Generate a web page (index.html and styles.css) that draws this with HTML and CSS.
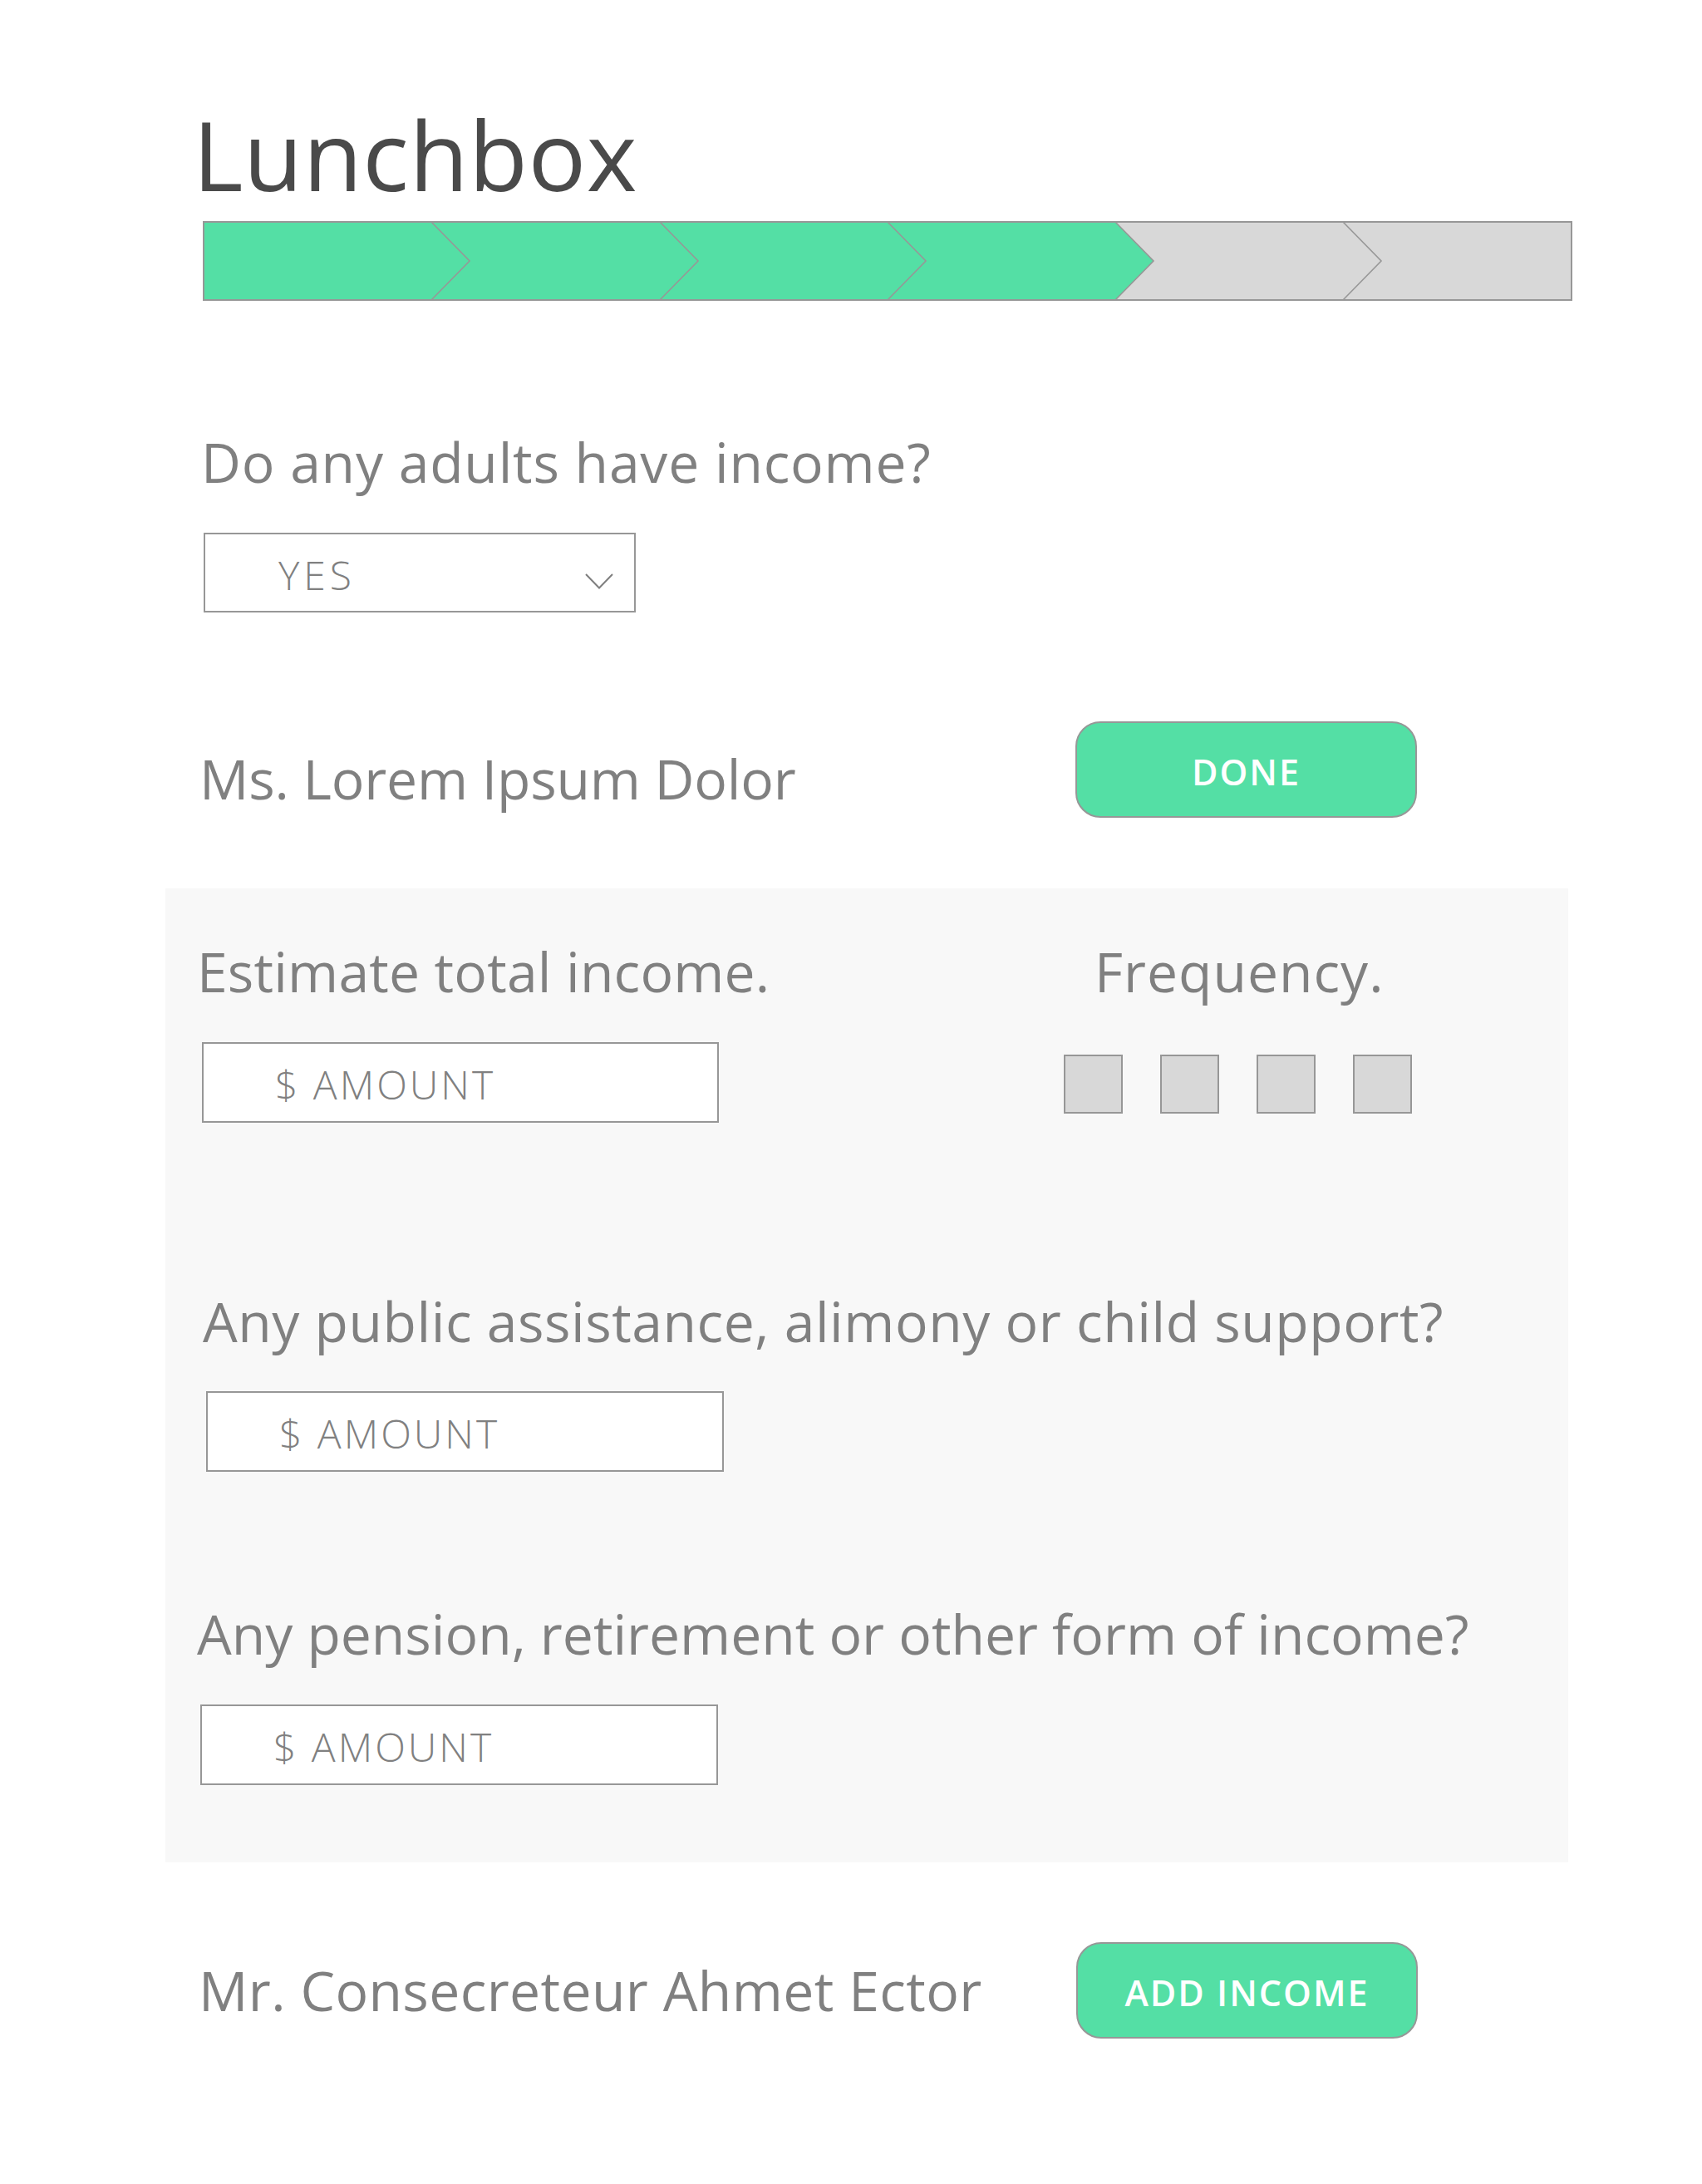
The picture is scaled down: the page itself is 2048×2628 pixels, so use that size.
FILE: index.html
```html
<!DOCTYPE html>
<html lang="en">
<head>
<meta charset="utf-8">
<title>Lunchbox</title>
<link rel="stylesheet" href="styles.css">
</head>
<body>
<div class="page">
  <h1 class="title">Lunchbox</h1>

  <svg class="progress" width="1648" height="96" viewBox="0 0 1648 96" aria-hidden="true">
    <rect x="1" y="1" width="1646" height="94" fill="#d8d8d8"/>
    <polygon points="1,1 1098,1 1144,48 1098,95 1,95" fill="#54dfa5"/>
    <g fill="none" stroke="#979797" stroke-width="1.6">
      <polyline points="275,1 321,48 275,95"/>
      <polyline points="550,1 596,48 550,95"/>
      <polyline points="824,1 870,48 824,95"/>
      <polyline points="1098,1 1144,48 1098,95"/>
      <polyline points="1372,1 1418,48 1372,95"/>
    </g>
    <rect x="1" y="1" width="1646" height="94" fill="none" stroke="#979797" stroke-width="2"/>
  </svg>

  <p class="label label-q1">Do any adults have income?</p>
  <div class="select">
    <span class="field-text select-text">YES</span>
    <svg class="chev" width="34" height="19" viewBox="0 0 34 19" aria-hidden="true">
      <polyline points="1,1 17,17.5 33,1" fill="none" stroke="#7f7f7f" stroke-width="2"/>
    </svg>
  </div>

  <div class="person person-first">
    <p class="label person-name">Ms. Lorem Ipsum Dolor</p>
    <div class="btn"><span class="btn-text">DONE</span></div>
  </div>

  <section class="panel">
    <div class="panel-row">
      <div class="col-left">
        <p class="label label-est">Estimate total income.</p>
        <div class="field field-1"><span class="field-text">$ AMOUNT</span></div>
      </div>
      <div class="col-right">
        <p class="label label-freq">Frequency.</p>
        <div class="freq">
          <span class="sq"></span><span class="sq"></span><span class="sq"></span><span class="sq"></span>
        </div>
      </div>
    </div>

    <p class="label label-pub">Any public assistance, alimony or child support?</p>
    <div class="field field-2"><span class="field-text">$ AMOUNT</span></div>

    <p class="label label-pen">Any pension, retirement or other form of income?</p>
    <div class="field field-3"><span class="field-text">$ AMOUNT</span></div>
  </section>

  <div class="person person-second">
    <p class="label person-name">Mr. Consecreteur Ahmet Ector</p>
    <div class="btn"><span class="btn-text">ADD INCOME</span></div>
  </div>
</div>
</body>
</html>
```

FILE: styles.css
```css
* { box-sizing: border-box; }

html, body {
  margin: 0;
  padding: 0;
  background: #ffffff;
}

body {
  font-family: "Open Sans", "Liberation Sans", sans-serif;
  color: #808080;
}

.page {
  width: 2048px;
  min-height: 2628px;
  padding: 127px 0 0 240px;
}

.title {
  margin: 0 0 0 -8px;
  font-size: 116px;
  line-height: 1;
  font-weight: 400;
  color: #4a4a4a;
  letter-spacing: 0.5px;
}

.progress {
  display: block;
  margin: 23px 0 0 4px;
}

.label {
  margin: 0;
  font-size: 66px;
  line-height: 1;
  font-weight: 400;
  color: #808080;
  white-space: nowrap;
}

.label-q1 { margin: 160px 0 0 2px; letter-spacing: 0.8px; }

.field-text {
  font-size: 48px;
  line-height: 1;
  font-weight: 300;
  color: #808080;
  padding-top: 5px;
  letter-spacing: 3px;
}

.select-text { letter-spacing: 5px; }

.select {
  margin: 53px 0 0 5px;
  width: 520px;
  height: 96px;
  border: 2px solid #979797;
  background: #ffffff;
  display: flex;
  align-items: center;
  justify-content: space-between;
  padding: 0 25px 0 88px;
}

.chev {
  display: block;
  margin-top: 20px;
}

.person {
  display: grid;
  grid-template-columns: 1054px 411px;
  align-items: start;
}

.person-first { margin-top: 131px; }
.person-first .person-name { margin-top: 35px; letter-spacing: -0.2px; }

.person-second { margin-top: 96px; grid-template-columns: 1055px 411px; }
.person-second .person-name { margin-top: 24px; margin-left: -1px; letter-spacing: 0.4px; }

.btn {
  height: 116px;
  border: 2px solid #979797;
  border-radius: 30px;
  background: #54dfa5;
  display: flex;
  align-items: center;
  justify-content: center;
}

.btn-text {
  font-size: 43px;
  line-height: 1;
  font-weight: 600;
  color: #ffffff;
  letter-spacing: 2px;
  padding-top: 4px;
}

.panel {
  margin: 85px 0 0 -41px;
  width: 1688px;
  background: #f8f8f8;
  padding: 66px 0 93px 41px;
}

.panel-row {
  display: grid;
  grid-template-columns: 1040px 420px;
}

.label-est { margin-left: -3px; letter-spacing: 0.2px; }
.label-freq { margin-left: 37px; letter-spacing: 1px; }

.field {
  width: 623px;
  height: 97px;
  border: 2px solid #979797;
  background: #ffffff;
  display: flex;
  align-items: center;
  padding-left: 86px;
}

.field-1 { margin: 53px 0 0 3px; width: 622px; }

.freq {
  display: flex;
  gap: 45px;
  margin-top: 68px;
}

.sq {
  width: 71px;
  height: 71px;
  border: 2px solid #979797;
  background: #d8d8d8;
}

.label-pub { margin: 205px 0 0 4px; letter-spacing: 0.55px; }
.field-2 { margin: 52px 0 0 8px; }

.label-pen { margin: 161px 0 0 -3px; }
.field-3 { margin: 53px 0 0 1px; }
```
